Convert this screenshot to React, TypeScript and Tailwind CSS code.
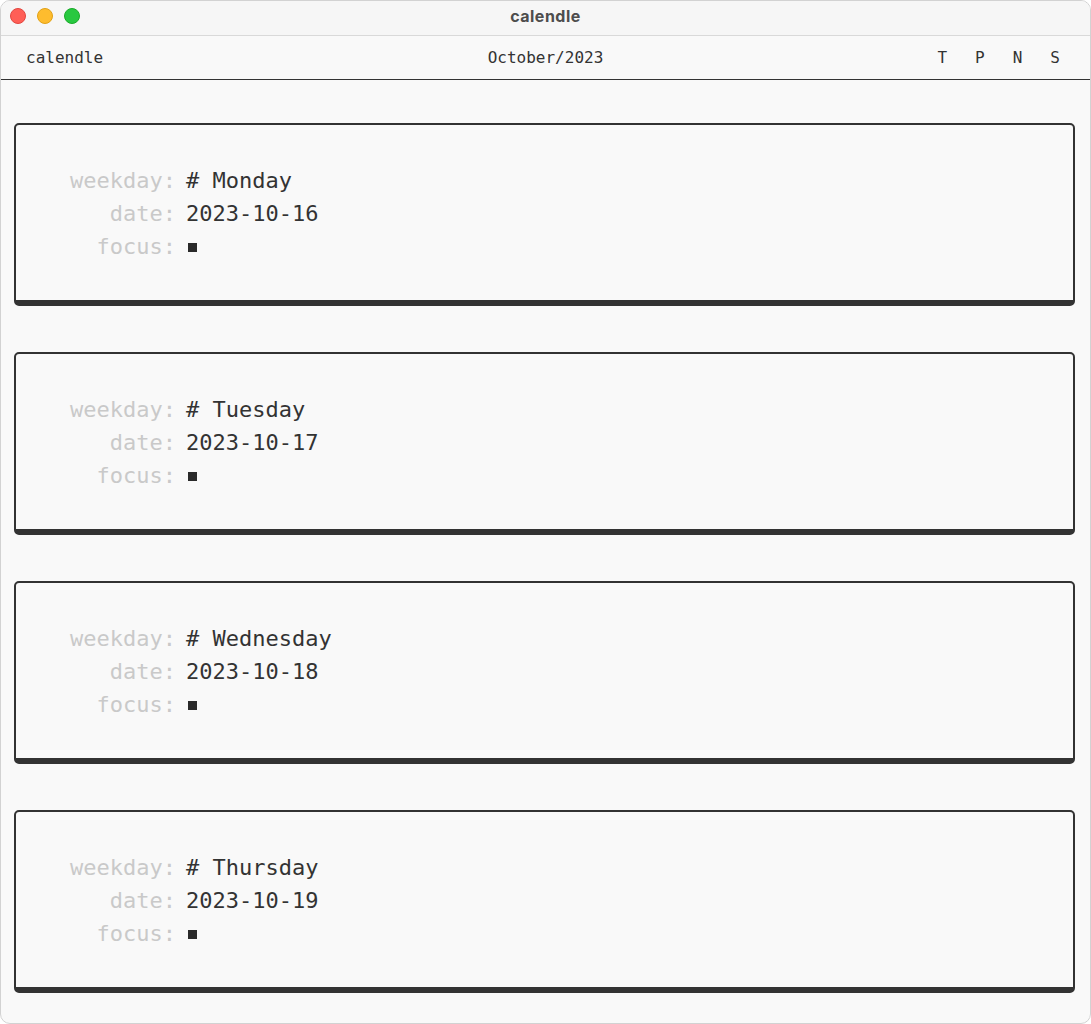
import React from 'react';

type Day = { weekday: string; date: string };

const days: Day[] = [
  { weekday: 'Monday', date: '2023-10-16' },
  { weekday: 'Tuesday', date: '2023-10-17' },
  { weekday: 'Wednesday', date: '2023-10-18' },
  { weekday: 'Thursday', date: '2023-10-19' },
];

const mono = "font-['DejaVu_Sans_Mono','Liberation_Mono',monospace]";

function TitleBar() {
  return (
    <div className="relative flex h-[35px] items-center border-b border-[#d9d9d9] bg-[#f6f6f6]">
      <div className="absolute left-[9px] top-[7px] flex gap-[11px]">
        <span className="block h-[16px] w-[16px] rounded-full border border-[#e2463f] bg-[#ff5f57]" />
        <span className="block h-[16px] w-[16px] rounded-full border border-[#e1a116] bg-[#febc2e]" />
        <span className="block h-[16px] w-[16px] rounded-full border border-[#1aab29] bg-[#28c840]" />
      </div>
      <div className="-mt-[4px] flex-1 text-center font-['Inter','Noto_Sans',sans-serif] text-[16px] font-bold tracking-[0.5px] text-[#4d4d4d]">
        calendle
      </div>
    </div>
  );
}

function Header() {
  return (
    <div className={`grid h-[44px] grid-cols-3 items-center border-b border-[#333] px-[25px] text-[16px] text-[#333] ${mono}`}>
      <span>calendle</span>
      <span className="text-center">October/2023</span>
      <div className="flex justify-end gap-[28px] pr-[5px]">
        <span>T</span>
        <span>P</span>
        <span>N</span>
        <span>S</span>
      </div>
    </div>
  );
}

function DayCard({ day }: { day: Day }) {
  return (
    <div className="h-[183px] rounded-[5px] border-2 border-b-[6px] border-[#333] bg-[#f9f9f9] pl-[54px] pt-[39px]">
      <div className={`grid grid-cols-[106px_1fr] gap-x-[10px] text-[22px] leading-[33px] ${mono}`}>
        <span className="text-right text-[#c9c9c9]">weekday:</span>
        <span className="text-[#333]"># {day.weekday}</span>
        <span className="text-right text-[#c9c9c9]">date:</span>
        <span className="text-[#333]">{day.date}</span>
        <span className="text-right text-[#c9c9c9]">focus:</span>
        <span className="flex items-center">
          <span className="ml-[2px] mt-[2px] block h-[9px] w-[9px] bg-[#2a2a2a]" />
        </span>
      </div>
    </div>
  );
}

export default function App() {
  return (
    <div className="h-[1024px] w-[1091px] bg-white">
      <div className="h-full w-full overflow-hidden rounded-[10px] border border-[#d2d2d2] bg-[#f9f9f9]">
        <TitleBar />
        <Header />
        <div className="flex flex-col gap-[46px] pl-[13px] pr-[15px] pt-[43px]">
          {days.map((d) => (
            <DayCard key={d.date} day={d} />
          ))}
        </div>
      </div>
    </div>
  );
}
